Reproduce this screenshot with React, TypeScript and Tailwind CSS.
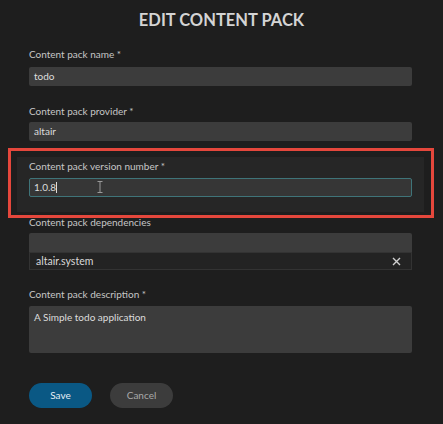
import React from "react";

function Label({ children, className = "" }: { children: React.ReactNode; className?: string }) {
  return <div className={"text-[10px] leading-[16px] text-[#c6c6c6] " + className}>{children}</div>;
}

export default function App() {
  return (
    <div className="relative w-[443px] h-[424px] overflow-hidden bg-[#1e1e1e] font-['Lato',sans-serif]">
      <div className="pt-[8px] h-[32px] text-center text-[16.5px] leading-[24px] font-bold text-[#d4d4d4]">
        EDIT CONTENT PACK
      </div>
      <div className="px-[29px] w-[441px]">
        <Label className="mt-[14px]">Content pack name *</Label>
        <div className="mt-[5px] h-[19px] bg-[#3c3c3c] rounded-[2px] px-[5px] text-[10px] leading-[19px] text-[#dcdcdc]">
          todo
        </div>

        <Label className="mt-[17px]">Content pack provider *</Label>
        <div className="mt-[3px] h-[19px] bg-[#3c3c3c] rounded-[2px] px-[5px] text-[10px] leading-[19px] text-[#dcdcdc]">
          altair
        </div>

        <div className="mt-[16px] -mx-[12px] px-[12px] pt-[1px] pb-[15px] bg-[#262626]">
          <Label>Content pack version number *</Label>
          <div className="relative mt-[4px] h-[19px] bg-[#363636] border border-[#3f7479] rounded-[2px] px-[4px] text-[10px] leading-[17px] text-[#dcdcdc] flex items-center">
            <span>1.0.8</span>
            <span className="inline-block w-[1px] h-[11px] bg-[#dcdcdc]" />
            <svg className="absolute left-[67px] top-[2px]" width="6" height="12" viewBox="0 0 6 12">
              <path d="M0.5 0.5H5.5M3 0.5V11.5M0.5 11.5H5.5" stroke="#9a9a9a" strokeWidth="1" fill="none" />
            </svg>
          </div>
        </div>

        <Label className="mt-[2px]">Content pack dependencies</Label>
        <div className="mt-[3px] h-[19px] bg-[#3c3c3c] rounded-t-[2px]" />
        <div className="h-[18px] bg-[#232323] border border-[#333333] px-[6px] flex items-center justify-between text-[10.5px] leading-[16px] text-[#d8d8d8]">
          <span>altair.system</span>
          <svg width="9" height="9" viewBox="0 0 9 9" className="mr-[4px]">
            <path d="M1 1L8 8M8 1L1 8" stroke="#d0d0d0" strokeWidth="1.4" />
          </svg>
        </div>

        <Label className="mt-[16px]">Content pack description *</Label>
        <div className="mt-[4px] h-[47px] bg-[#3c3c3c] rounded-[2px] px-[5px] pt-[3px] text-[10px] leading-[17px] text-[#dcdcdc]">
          A Simple todo application
        </div>

        <div className="mt-[30px] flex gap-[18px]">
          <button className="w-[63px] h-[25px] rounded-full bg-[#0a5884] text-[10px] text-[#e6eef4]">Save</button>
          <button className="w-[63px] h-[25px] rounded-full bg-[#3c3c3c] text-[10px] text-[#a9a9a9]">Cancel</button>
        </div>
      </div>

      <div className="absolute left-[8px] top-[148px] w-[426px] h-[70px] border-[3px] border-[#e5473c]" />
    </div>
  );
}
